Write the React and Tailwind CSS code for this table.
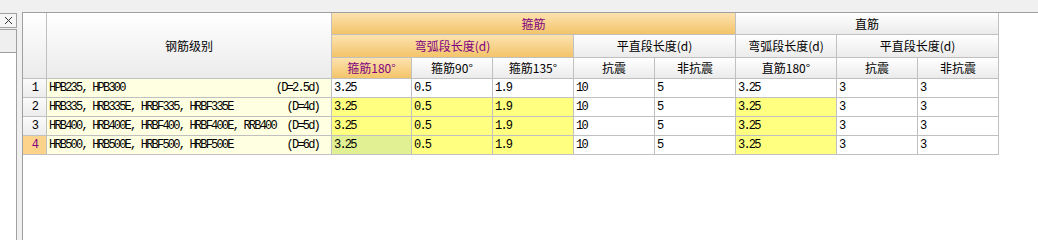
import React from 'react';

const cn = 'font-[family-name:Noto_Sans_CJK_SC,sans-serif]';
const mono = 'font-[family-name:Liberation_Mono,Noto_Sans_CJK_SC,monospace] text-[12px] tracking-[-1.8px]';

const grayHead = 'bg-gradient-to-b from-white to-[#ebebeb] text-black';
const orangeHead = 'bg-gradient-to-b from-[#fde2ae] to-[#f3c468] text-[#800080]';

const rows = [
  { n: 1, name: 'HPB235, HPB300', d: '(D=2.5d)' },
  { n: 2, name: 'HRB335, HRB335E, HRBF335, HRBF335E', d: '(D=4d)' },
  { n: 3, name: 'HRB400, HRB400E, HRBF400, HRBF400E, RRB400', d: '(D=5d)' },
  { n: 4, name: 'HRB500, HRB500E, HRBF500, HRBF500E', d: '(D=6d)' },
];

const values = ['3.25', '0.5', '1.9', '10', '5', '3.25', '3', '3'];

const Head = ({ className, children }) => (
  <div className={`border-r border-b border-[#c0c0c0] flex items-center justify-center text-[12px] ${cn} ${className}`}>
    {children}
  </div>
);

const cellBg = (r, c) => {
  if (r === 0) return 'bg-white';
  if (r === 3 && c === 0) return 'bg-[#e1f093]';
  if (c <= 2 || c === 5) return 'bg-[#ffff80]';
  return 'bg-white';
};

const App = () => {
  return (
    <div className="w-[1038px] h-[240px] bg-[#f0f0f0] flex flex-col overflow-hidden">
      {/* top strip */}
      <div className="h-[12px] shrink-0" />

      <div className="flex flex-1">
        {/* left docked panel */}
        <div className="w-[17px] flex flex-col">
          <div className="mt-[1px] h-[15px] border border-l-0 border-[#a0a0a0] bg-[#f5f5f5] flex items-center justify-center">
            <svg width="9" height="9" viewBox="0 0 9 9">
              <path d="M1 1 L8 8 M8 1 L1 8" stroke="#333" strokeWidth="1" />
            </svg>
          </div>
          <div className="mt-[1px] flex-1 flex flex-col border-t border-r border-[#a0a0a0]">
            <div className="h-[23px] bg-[#efefef] border-b border-[#a0a0a0]" />
            <div className="flex-1 bg-white" />
          </div>
        </div>

        {/* splitter */}
        <div className="w-[5px] bg-[#f0f0f0]" />

        {/* grid area */}
        <div className="flex-1 bg-white border-t border-l border-[#a0a0a0]">
          <div className="grid grid-cols-[24px_285px_80px_81px_81px_81px_81px_101px_81px_81px] grid-rows-[22px_23px_21px_19px_19px_19px_19px] w-fit">
            {/* header */}
            <Head className={`${grayHead} row-span-3`} />
            <Head className={`${grayHead} row-span-3`}>钢筋级别</Head>
            <Head className={`${orangeHead} col-span-5`}>箍筋</Head>
            <Head className={`${grayHead} col-span-3`}>直筋</Head>

            <Head className={`${orangeHead} col-span-3`}>弯弧段长度(d)</Head>
            <Head className={`${grayHead} col-span-2`}>平直段长度(d)</Head>
            <Head className={grayHead}>弯弧段长度(d)</Head>
            <Head className={`${grayHead} col-span-2`}>平直段长度(d)</Head>

            <Head className={orangeHead}>箍筋180°</Head>
            <Head className={grayHead}>箍筋90°</Head>
            <Head className={grayHead}>箍筋135°</Head>
            <Head className={grayHead}>抗震</Head>
            <Head className={grayHead}>非抗震</Head>
            <Head className={grayHead}>直筋180°</Head>
            <Head className={grayHead}>抗震</Head>
            <Head className={grayHead}>非抗震</Head>

            {/* data rows */}
            {rows.map((row, r) => (
              <React.Fragment key={row.n}>
                <div
                  className={`border-r border-b border-[#c0c0c0] flex items-center justify-center ${mono} ${
                    r === 3
                      ? 'bg-[#fdd38c] text-[#800080]'
                      : 'bg-gradient-to-b from-[#fbfbfb] to-[#ececec] text-black'
                  }`}
                >
                  {row.n}
                </div>
                <div className={`border-r border-b border-[#c0c0c0] bg-[#ffffe1] flex items-center justify-between pl-[2px] pr-[12px] text-black ${mono}`}>
                  <span>{row.name}</span>
                  <span>{row.d}</span>
                </div>
                {values.map((v, c) => (
                  <div
                    key={c}
                    className={`border-r border-b border-[#c0c0c0] flex items-center pl-[2px] text-black ${mono} ${cellBg(r, c)}`}
                  >
                    {v}
                  </div>
                ))}
              </React.Fragment>
            ))}
          </div>
        </div>
      </div>
    </div>
  );
};

export default App;
